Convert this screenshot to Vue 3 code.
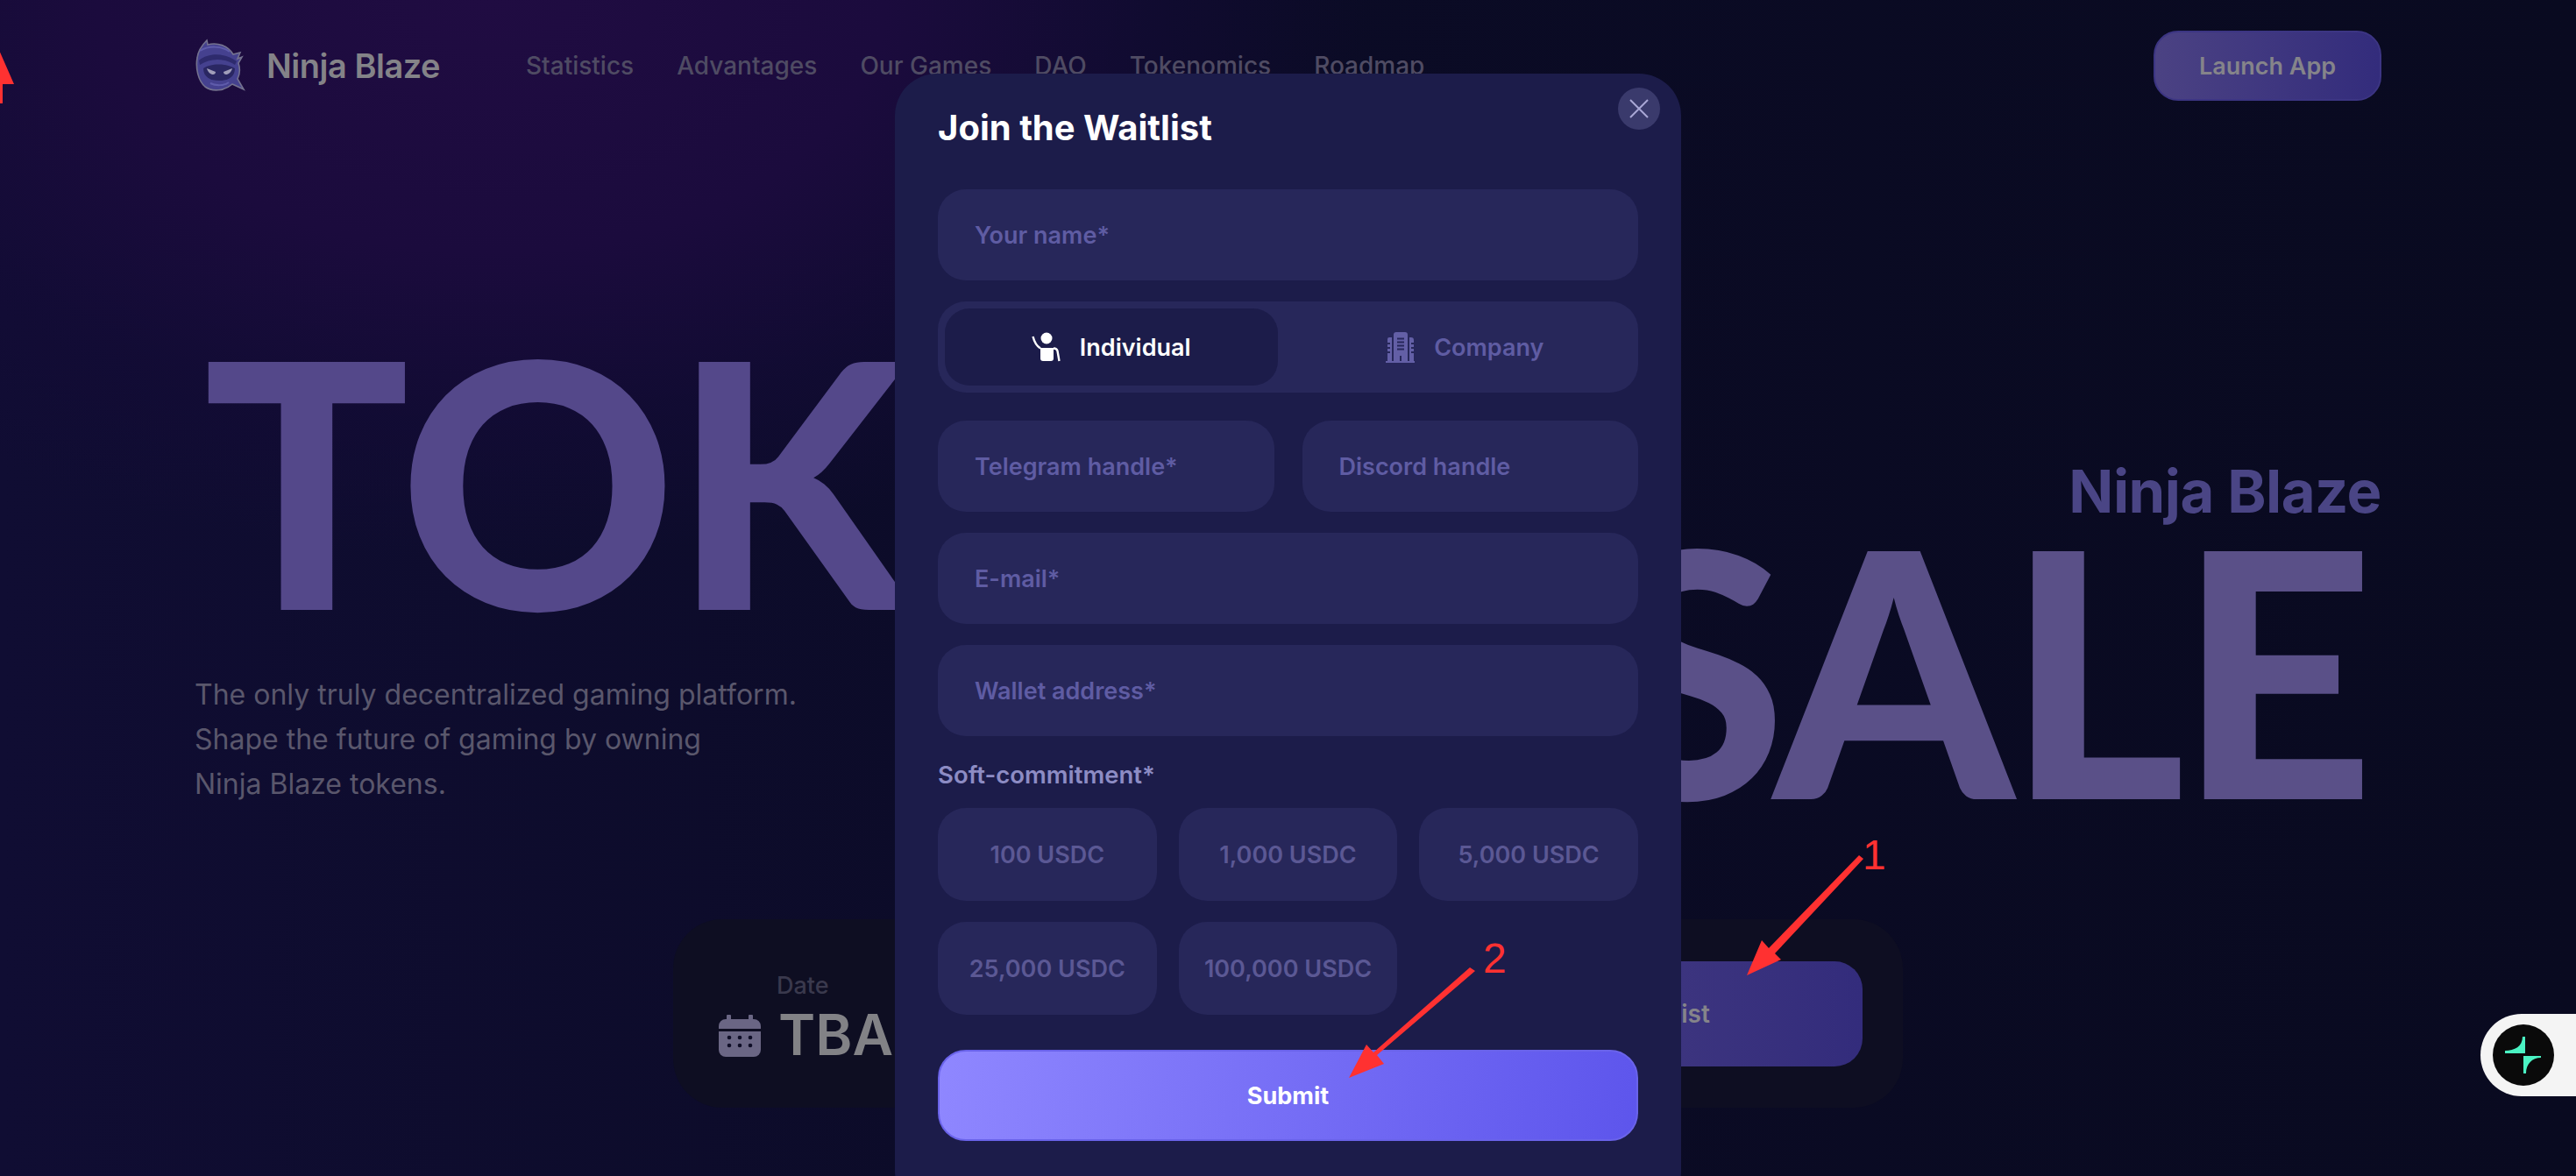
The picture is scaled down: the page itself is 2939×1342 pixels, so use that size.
<script setup>
const navLinks = ['Statistics', 'Advantages', 'Our Games', 'DAO', 'Tokenomics', 'Roadmap']
const amounts = ['100 USDC', '1,000 USDC', '5,000 USDC', '25,000 USDC', '100,000 USDC']
</script>

<template>
  <div class="page">
    <header class="top">
      <div class="brand">
        <svg class="brand-logo" viewBox="12 8 58 62">
          <path d="M15 30 C16 22 20 16 26 10 L27 15 C38 12 50 16 56 26 L64 24 L61 31 L66 29 L62 36 C64 42 64 48 61 54 L68 66 L55 60 C46 68 32 69 24 63 C16 56 13 42 15 30 Z" fill="#45418f" stroke="#74728f" stroke-width="1.6" />
          <path d="M17 33 C28 24 46 24 60 34 L58 38 C46 30 30 30 18 38 Z" fill="#2e2b6d" />
          <path d="M18 22 C28 16 42 16 52 23" fill="none" stroke="#5f5cab" stroke-width="2" />
          <path d="M22 42 C30 36 48 36 58 42 C58 52 50 56 40 56 C30 56 22 52 22 42 Z" fill="#2a2762" />
          <path d="M26 42 L36 46 C36 51 28 50 26 42 Z M55 42 L45 46 C45 51 53 50 55 42 Z" fill="#a09eb9" />
          <path d="M30 59 C36 62 46 62 51 58" fill="none" stroke="#5f5cab" stroke-width="2" />
        </svg>
        <span class="brand-name">Ninja Blaze</span>
      </div>
      <nav class="nav">
        <a v-for="link in navLinks" :key="link">{{ link }}</a>
      </nav>
      <button class="launch">Launch App</button>
    </header>

    <section class="hero">
      <h1 class="hero-first">TOKEN</h1>
      <div class="hero-side">
        <p class="hero-text">
          The only truly decentralized gaming platform.<br />
          Shape the future of gaming by owning<br />
          Ninja Blaze tokens.
        </p>
        <div class="hero-right">
          <div class="hero-brand">Ninja Blaze</div>
          <div class="hero-second">SALE</div>
        </div>
      </div>
    </section>

    <section class="sale-card">
      <svg class="calendar" viewBox="0 0 48 48">
        <path d="M10 0h3a1 1 0 0 1 1 1v4h20V1a1 1 0 0 1 1-1h3a1 1 0 0 1 1 1v4h1a8 8 0 0 1 8 8v3H0v-3a8 8 0 0 1 8-8h1V1a1 1 0 0 1 1-1Z" fill="#6a6684" />
        <path d="M0 19h48v21a8 8 0 0 1-8 8H8a8 8 0 0 1-8-8Z" fill="#6a6684" />
        <g fill="#0e0d26">
          <circle cx="12" cy="26" r="2.3" /><circle cx="24" cy="26" r="2.3" /><circle cx="36" cy="26" r="2.3" />
          <circle cx="12" cy="35" r="2.3" /><circle cx="24" cy="35" r="2.3" /><circle cx="36" cy="35" r="2.3" />
        </g>
      </svg>
      <div class="date">
        <span class="date-label">Date</span>
        <span class="date-value">TBA</span>
      </div>
      <button class="join">Join the Waitlist</button>
    </section>

    <div class="overlay">
      <form class="modal" @submit.prevent>
        <h2 class="modal-title">Join the Waitlist</h2>
        <button type="button" class="close" aria-label="Close">
          <svg viewBox="0 0 22 22" width="22" height="22">
            <path d="M1 1l20 20M21 1L1 21" stroke="#a9a7d6" stroke-width="2" fill="none" />
          </svg>
        </button>

        <input class="field" placeholder="Your name*" />

        <div class="switch">
          <button type="button" class="switch-item active">
            <svg viewBox="0 0 33 34" width="33" height="34">
              <circle cx="17" cy="7" r="6.5" fill="#fff" />
              <path d="M10 18h15v12a3 3 0 0 1-3 3h-9a3 3 0 0 1-3-3Z" fill="#fff" />
              <path d="M1.5 5C3 11 6 16 10 18.5" fill="none" stroke="#fff" stroke-width="2.4" />
              <path d="M25 18.5c2.4 0 4 1 4.5 3L31.5 33" fill="none" stroke="#fff" stroke-width="2.4" />
            </svg>
            Individual
          </button>
          <button type="button" class="switch-item">
            <svg viewBox="0 0 33 35" width="33" height="35">
              <path d="M9 3a3 3 0 0 1 3-3h10a3 3 0 0 1 3 3v30H9Z M0 33h33v2H0Z M2 8a2 2 0 0 1 2-2h3v27H2Z M27 6h2a3 3 0 0 1 3 3v24h-5Z" fill="#635fa6" />
              <path d="M13 6.5h8v2h-8Z M13 10.5h8v2h-8Z M13 14.5h8v2h-8Z M13 18.5h8v2h-8Z M16 27h2v6h-2Z M2 12h3v2H2Z M2 17h3v2H2Z M2 22h3v2H2Z M29 12h3v2h-3Z M29 17h3v2h-3Z M29 22h3v2h-3Z" fill="#27275a" />
            </svg>
            Company
          </button>
        </div>

        <div class="field-row">
          <input class="field" placeholder="Telegram handle*" />
          <input class="field" placeholder="Discord handle" />
        </div>
        <input class="field" placeholder="E-mail*" />
        <input class="field" placeholder="Wallet address*" />

        <div class="group-label">Soft-commitment*</div>
        <div class="amounts">
          <button v-for="a in amounts" :key="a" type="button" class="amount">{{ a }}</button>
        </div>

        <button type="submit" class="submit">Submit</button>
      </form>
    </div>

    <div class="widget">
      <span class="widget-dot">
        <svg viewBox="0 0 42 42" width="42" height="42">
          <path d="M20 0h3v19H0v-3c11 0 20-5 20-16Z" fill="#4af3c3" />
          <path d="M21 22h20v2c-10 0-17 7-17 18h-3Z" fill="#4af3c3" />
        </svg>
      </span>
    </div>

    <!-- annotations drawn over the screenshot -->
    <svg class="marks" viewBox="0 0 2939 1342" width="2939" height="1342">
      <g fill="#ff3131">
        <path d="M-2 55L16 96H3V118H-3Z" />
        <path d="M2121 976L2126 980L2025 1088L2032 1095L1993 1113L2010 1073L2018 1082Z" />
        <path d="M1677 1104L1683 1108L1571 1204L1579 1214L1539 1230L1559 1192L1567 1201Z" />
      </g>
      <text x="2125" y="992" class="mark-num">1</text>
      <text x="1692" y="1110" class="mark-num">2</text>
    </svg>
  </div>
</template>

<style>
html,
body {
  margin: 0;
  background: #090a20;
}
</style>

<style scoped>
.page {
  position: relative;
  width: 2939px;
  height: 1342px;
  overflow: hidden;
  font-family: Inter, 'Noto Sans', sans-serif;
  background:
    radial-gradient(ellipse 1000px 640px at 560px 0, #200c42 0%, #1b0b3d 45%, rgba(20, 11, 55, 0.6) 75%, rgba(9, 10, 32, 0) 100%),
    linear-gradient(90deg, #100d33 0%, #0b0b26 45%, #090a20 100%);
  box-sizing: border-box;
  padding: 35px 222px 0;
}

.top {
  display: flex;
  align-items: center;
  height: 80px;
}

.brand {
  display: flex;
  align-items: center;
  gap: 24px;
  width: 378px;
}

.brand-logo {
  width: 58px;
  height: 62px;
}

.brand-name {
  font-size: 38px;
  font-weight: 600;
  color: #848388;
  letter-spacing: -0.5px;
  white-space: nowrap;
}

.nav {
  display: flex;
  gap: 49px;
  flex: 1;
}

.nav a {
  font-size: 28px;
  font-weight: 500;
  color: #4f4b63;
  white-space: nowrap;
}

.launch {
  width: 260px;
  height: 80px;
  border: 2px solid #3c3583;
  border-radius: 28px;
  background: linear-gradient(90deg, #4b4283, #332c7c);
  color: #85848a;
  font: 600 27px Inter, sans-serif;
}

.hero {
  margin-top: 290px;
}

.hero-first {
  margin: 0 0 0 10px;
  height: 280px;
  font-family: Lato, Inter, sans-serif;
  font-size: 390px;
  line-height: 280px;
  font-weight: 900;
  color: #54488a;
  letter-spacing: -4px;
}

.hero-side {
  display: flex;
  justify-content: space-between;
  margin-top: -164px;
}

.hero-text {
  margin: 246px 0 0;
  font-size: 32px;
  line-height: 51px;
  color: #5a576c;
}

.hero-right {
  text-align: right;
}

.hero-brand {
  font-size: 67px;
  line-height: 80px;
  font-weight: 700;
  color: #4a4585;
  letter-spacing: -0.5px;
}

.hero-second {
  margin: 15px 16px 0 0;
  height: 290px;
  font-family: Lato, Inter, sans-serif;
  font-size: 390px;
  line-height: 290px;
  font-weight: 900;
  color: #5a5088;
  letter-spacing: -8px;
}

.sale-card {
  position: absolute;
  left: 768px;
  top: 1049px;
  width: 1403px;
  height: 215px;
  box-sizing: border-box;
  padding: 0 46px 0 52px;
  display: flex;
  align-items: center;
  justify-content: space-between;
  border-radius: 56px;
  background: #0e0e22;
}

.calendar {
  width: 48px;
  height: 48px;
  margin-top: 50px;
}

.date {
  display: flex;
  flex-direction: column;
  gap: 4px;
  margin: 12px 0 0 20px;
  flex: 1;
}

.date-label {
  margin-left: -2px;
  font-size: 27px;
  font-weight: 500;
  color: #3a394d;
}

.date-value {
  font-size: 64px;
  line-height: 72px;
  font-weight: 600;
  color: #828286;
}

.join {
  width: 564px;
  height: 120px;
  border: 0;
  border-radius: 32px;
  background: linear-gradient(90deg, #4b4283, #332c7c);
  color: #85848a;
  font: 600 28px Inter, sans-serif;
}

.overlay {
  position: absolute;
  inset: 0;
  display: flex;
  justify-content: center;
  align-items: flex-start;
  padding-top: 84px;
  box-sizing: border-box;
}

.modal {
  position: relative;
  width: 897px;
  height: 1300px;
  flex: none;
  box-sizing: border-box;
  padding: 36px 49px 0;
  display: flex;
  flex-direction: column;
  gap: 24px;
  border-radius: 48px;
  background: #1c1c4a;
}

.modal-title {
  margin: 0 0 8px;
  height: 64px;
  font-size: 40px;
  line-height: 52px;
  font-weight: 700;
  color: #fff;
}

.close {
  position: absolute;
  top: 16px;
  right: 24px;
  width: 48px;
  height: 48px;
  padding: 0;
  display: flex;
  align-items: center;
  justify-content: center;
  border: 0;
  border-radius: 50%;
  background: #3a3a6c;
}

.field {
  width: 100%;
  min-width: 0;
  height: 104px;
  box-sizing: border-box;
  padding: 0 42px;
  border: 0;
  outline: 0;
  border-radius: 32px;
  background: #27275a;
  font: 600 27px Inter, sans-serif;
  color: #fff;
}

.field::placeholder {
  color: #5f5ca3;
  opacity: 1;
}

.switch {
  display: grid;
  grid-template-columns: 1fr 1fr;
  gap: 24px;
  height: 104px;
  margin-bottom: 8px;
  box-sizing: border-box;
  padding: 8px;
  border-radius: 32px;
  background: #27275a;
}

.switch-item {
  display: flex;
  align-items: center;
  justify-content: center;
  gap: 22px;
  border: 0;
  border-radius: 28px;
  background: none;
  font: 600 27px Inter, sans-serif;
  color: #5f5ca3;
}

.switch-item.active {
  background: #1c1c4a;
  color: #fff;
}

.field-row {
  display: grid;
  grid-template-columns: 1fr 1fr;
  gap: 32px;
}

.group-label {
  margin-top: 3px;
  margin-bottom: -3px;
  font-size: 27.5px;
  line-height: 34px;
  font-weight: 600;
  color: #8d8cc4;
}

.amounts {
  display: grid;
  grid-template-columns: repeat(3, 1fr);
  gap: 24px 25px;
}

.amount {
  height: 106px;
  border: 0;
  border-radius: 32px;
  background: #27275a;
  font: 600 27px Inter, sans-serif;
  color: #5b5894;
  white-space: nowrap;
  padding: 0;
}

.submit {
  height: 104px;
  margin-top: 16px;
  border: 2px solid #6a63ea;
  border-radius: 32px;
  background: linear-gradient(100deg, #8f87ff, #5d55ec);
  font: 700 27px Inter, sans-serif;
  color: #fff;
}

.widget {
  position: absolute;
  right: 0;
  top: 1157px;
  width: 109px;
  height: 94px;
  box-sizing: border-box;
  padding: 12px 14px;
  border-radius: 47px 0 0 47px;
  background: #f4f4f4;
}

.widget-dot {
  display: flex;
  align-items: center;
  justify-content: center;
  width: 70px;
  height: 70px;
  border-radius: 50%;
  background: #0a0a0a;
}

.marks {
  position: absolute;
  left: 0;
  top: 0;
  pointer-events: none;
}

.mark-num {
  font: 400 48px 'Liberation Sans', sans-serif;
  fill: #ff3131;
}
</style>
